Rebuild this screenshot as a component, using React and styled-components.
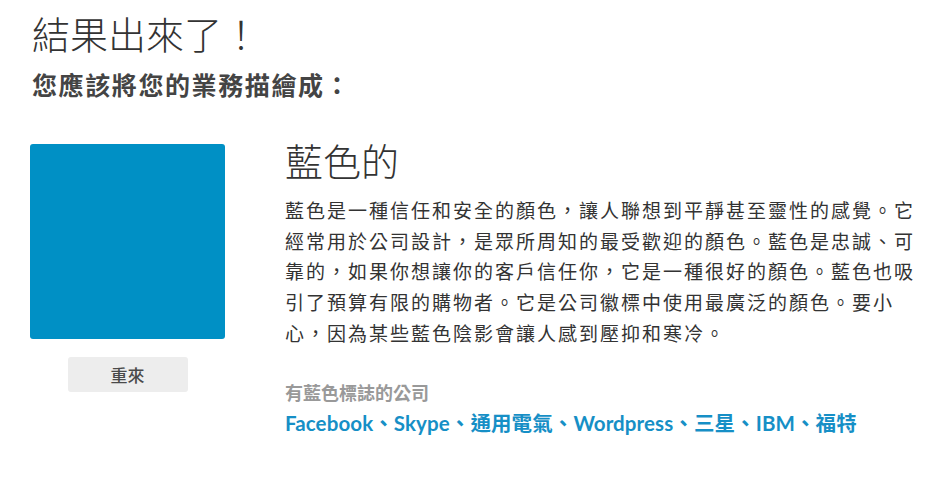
import React from "react";
import styled, { createGlobalStyle } from "styled-components";

const Global = createGlobalStyle`
  body {
    margin: 0;
    background: #fff;
    font-family: "Lato", "Noto Sans CJK TC", sans-serif;
  }
`;

const Page = styled.div`
  padding: 7px 30px 0 30px;
`;

const Title = styled.h1`
  margin: 0;
  font-size: 38px;
  font-weight: 300;
  color: #333;
  line-height: 54px;
  padding-left: 2px;
`;

const Subtitle = styled.h2`
  margin: 8px 0 0 0;
  font-size: 25px;
  font-weight: 700;
  color: #444;
  letter-spacing: 1.6px;
  line-height: 32px;
  padding-left: 2px;
`;

const Result = styled.div`
  display: flex;
  gap: 60px;
  margin-top: 35px;
`;

const Swatch = styled.div`
  display: flex;
  flex-direction: column;
  align-items: center;
  width: 195px;
  flex-shrink: 0;
  padding-top: 8px;
`;

const ColorBox = styled.div`
  width: 195px;
  height: 195px;
  border-radius: 3px;
  background: ${(p) => p.color};
`;

const RetryButton = styled.button`
  margin-top: 18px;
  width: 120px;
  height: 35px;
  border: none;
  border-radius: 3px;
  background: #ededed;
  color: #4a4a4a;
  font-family: inherit;
  font-size: 17px;
  font-weight: 500;
  cursor: pointer;
`;

const Info = styled.div`
  width: 630px;
`;

const ColorName = styled.h3`
  margin: 0;
  font-size: 38px;
  font-weight: 300;
  color: #333;
  line-height: 50px;
`;

const Desc = styled.p`
  margin: 10px 0 0 0;
  font-size: 19px;
  letter-spacing: 2px;
  line-height: 30.7px;
  color: #333;
`;

const CompaniesLabel = styled.div`
  margin-top: 29px;
  font-size: 18px;
  font-weight: 700;
  color: #999;
  line-height: 28px;
`;

const Companies = styled.div`
  margin-top: 1px;
  font-size: 20.5px;
  font-weight: 700;
  letter-spacing: 0.1px;
  color: #168fc6;
  line-height: 30px;
`;

const result = {
  color: "#0090c5",
  name: "藍色的",
  desc: "藍色是一種信任和安全的顏色，讓人聯想到平靜甚至靈性的感覺。它經常用於公司設計，是眾所周知的最受歡迎的顏色。藍色是忠誠、可靠的，如果你想讓你的客戶信任你，它是一種很好的顏色。藍色也吸引了預算有限的購物者。它是公司徽標中使用最廣泛的顏色。要小心，因為某些藍色陰影會讓人感到壓抑和寒冷。",
  companies: ["Facebook", "Skype", "通用電氣", "Wordpress", "三星", "IBM", "福特"],
};

export default function App() {
  return (
    <Page>
      <Global />
      <Title>結果出來了！</Title>
      <Subtitle>您應該將您的業務描繪成：</Subtitle>
      <Result>
        <Swatch>
          <ColorBox color={result.color} />
          <RetryButton>重來</RetryButton>
        </Swatch>
        <Info>
          <ColorName>{result.name}</ColorName>
          <Desc>{result.desc}</Desc>
          <CompaniesLabel>有藍色標誌的公司</CompaniesLabel>
          <Companies>{result.companies.join("、")}</Companies>
        </Info>
      </Result>
    </Page>
  );
}
